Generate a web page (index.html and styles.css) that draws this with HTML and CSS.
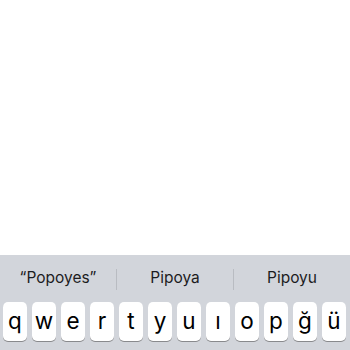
FILE: index.html
```html
<!DOCTYPE html>
<html>
<head>
<meta charset="utf-8">
<link rel="stylesheet" href="styles.css">
</head>
<body>
<div class="screen">
  <div class="content"></div>
  <div class="keyboard">
    <div class="suggestions">
      <div class="suggestion">“Popoyes”</div>
      <div class="sep"></div>
      <div class="suggestion">Pipoya</div>
      <div class="sep"></div>
      <div class="suggestion">Pipoyu</div>
    </div>
    <div class="row">
      <div class="key">q</div>
      <div class="key">w</div>
      <div class="key">e</div>
      <div class="key">r</div>
      <div class="key">t</div>
      <div class="key">y</div>
      <div class="key">u</div>
      <div class="key">ı</div>
      <div class="key">o</div>
      <div class="key">p</div>
      <div class="key">ğ</div>
      <div class="key">ü</div>
    </div>
  </div>
</div>
</body>
</html>
```
FILE: styles.css
```css
html, body {
  margin: 0;
  padding: 0;
  background: #ffffff;
}
.screen {
  width: 350px;
  height: 350px;
  display: flex;
  flex-direction: column;
  overflow: hidden;
  font-family: Inter, "Liberation Sans", sans-serif;
}
.content {
  height: 255px;
  flex: none;
  background: #ffffff;
}
.keyboard {
  flex: 1;
  background: #d2d5db;
  display: flex;
  flex-direction: column;
}
.suggestions {
  height: 47px;
  display: flex;
  align-items: center;
}
.suggestion {
  flex: 1;
  text-align: center;
  font-size: 15.5px;
  color: #1c1c1e;
  line-height: 20px;
  padding-bottom: 1px;
}
.sep {
  width: 1px;
  height: 21px;
  background: #b9bcc2;
  margin-top: 1px;
}
.row {
  display: flex;
  gap: 5px;
  padding: 0 4px 0 3px;
}
.key {
  width: 24px;
  height: 39px;
  flex: none;
  background: #ffffff;
  border-radius: 5px;
  box-shadow: 0 1px 0 #898a8d;
  display: flex;
  align-items: center;
  justify-content: center;
  font-size: 22.5px;
  color: #000000;
  padding-bottom: 3px;
  box-sizing: border-box;
}
```
